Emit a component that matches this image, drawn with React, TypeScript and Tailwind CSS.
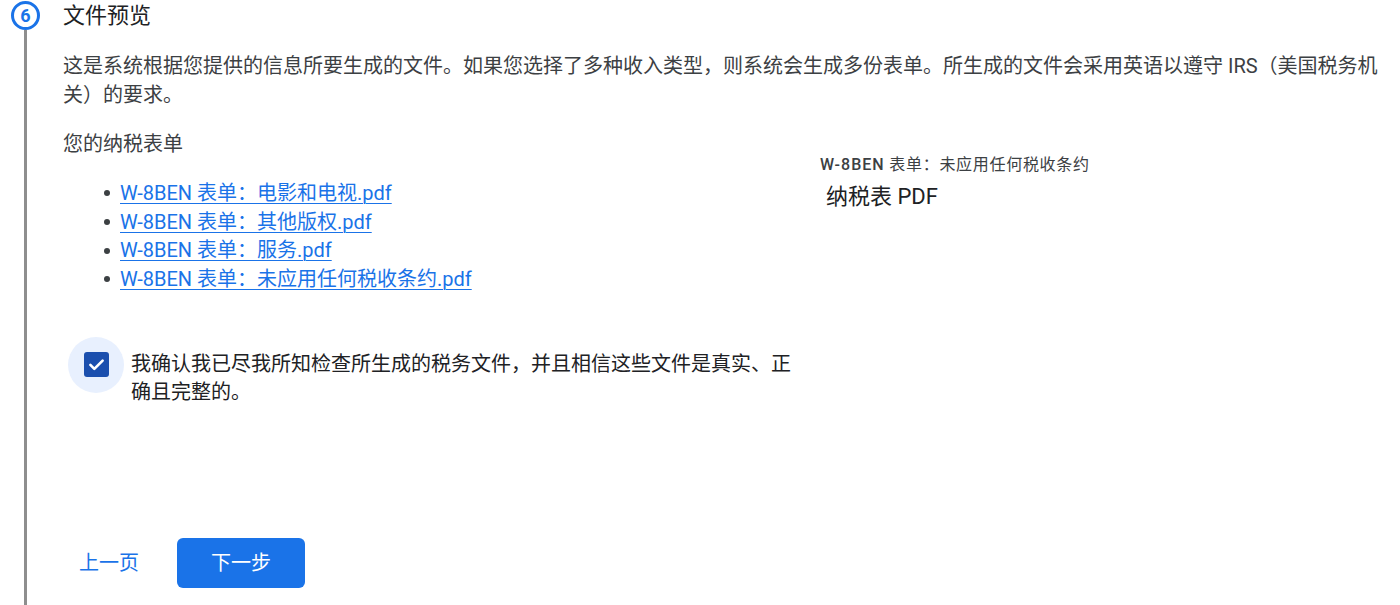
import React from "react";

const files = [
  "W-8BEN 表单：电影和电视.pdf",
  "W-8BEN 表单：其他版权.pdf",
  "W-8BEN 表单：服务.pdf",
  "W-8BEN 表单：未应用任何税收条约.pdf",
];

export default function App() {
  return (
    <div
      className="h-[605px] w-[1400px] overflow-hidden bg-white flex"
      style={{ fontFamily: "Roboto, 'Noto Sans CJK SC', sans-serif" }}
    >
      {/* rail */}
      <div className="w-[51px] flex flex-col items-center shrink-0">
        <div className="mt-[1px] w-[29px] h-[29px] rounded-full border-[3px] border-[#1a73e8] flex items-center justify-center text-[#1a73e8] text-[18px] font-bold leading-none">
          6
        </div>
        <div className="flex-1 w-[2.5px] bg-[#8e8e8e]" />
      </div>

      {/* content */}
      <div className="pl-[12px] flex-1 pr-[10px] flex flex-col">
        <div className="text-[22px] leading-[32px] text-[#202124]">文件预览</div>
        <p className="mt-[20px] text-[20px] leading-[29px] text-[#3c4043]">
          这是系统根据您提供的信息所要生成的文件。如果您选择了多种收入类型，则系统会生成多份表单。所生成的文件会采用英语以遵守 IRS（美国税务机关）的要求。
        </p>

        <div className="mt-[20px] flex gap-[20px]">
          <div className="w-[737px] shrink-0">
            <div className="text-[20px] leading-[29px] text-[#3c4043]">您的纳税表单</div>
            <ul className="mt-[20px]">
              {files.map((f) => (
                <li key={f} className="flex items-center pl-[41px] text-[20px] leading-[28.7px]">
                  <span className="w-[6px] h-[6px] rounded-full bg-[#3c4043] mr-[10px] shrink-0" />
                  <a href="#" className="text-[#1a73e8] underline underline-offset-[3px] decoration-[1px]">
                    {f}
                  </a>
                </li>
              ))}
            </ul>

            <div className="mt-[43px] flex items-start">
              <div className="ml-[5px] w-[56px] h-[56px] rounded-full bg-[#e8f0fe] flex items-center justify-center shrink-0">
                <div className="w-[25px] h-[25px] rounded-[3px] bg-[#1b4fae] flex items-center justify-center">
                  <svg width="21" height="21" viewBox="0 0 24 24" fill="none">
                    <path d="M5 12.5l4.5 4.5L19 7.5" stroke="white" strokeWidth="3" strokeLinecap="round" strokeLinejoin="round" />
                  </svg>
                </div>
              </div>
              <p className="ml-[7px] mt-[13px] text-[20px] leading-[28.5px] text-[#202124]">
                我确认我已尽我所知检查所生成的税务文件，并且相信这些文件是真实、正确且完整的。
              </p>
            </div>
          </div>

          <div className="pt-[24px]">
            <div className="text-[16px] leading-[22px] text-[#3c4043] tracking-[0.7px]">
              <span className="font-medium tracking-[1px]">W-8BEN</span> 表单：未应用任何税收条约
            </div>
            <div className="mt-[6px] ml-[6px] text-[22px] leading-[30px] text-[#202124]">纳税表 PDF</div>
          </div>
        </div>

        <div className="mt-auto mb-[17px] flex items-center">
          <button className="ml-[16px] text-[20px] text-[#1a73e8] leading-[29px]">上一页</button>
          <button className="ml-[38px] w-[128px] h-[50px] rounded-[6px] bg-[#1a73e8] text-white text-[20px]">
            下一步
          </button>
        </div>
      </div>
    </div>
  );
}
